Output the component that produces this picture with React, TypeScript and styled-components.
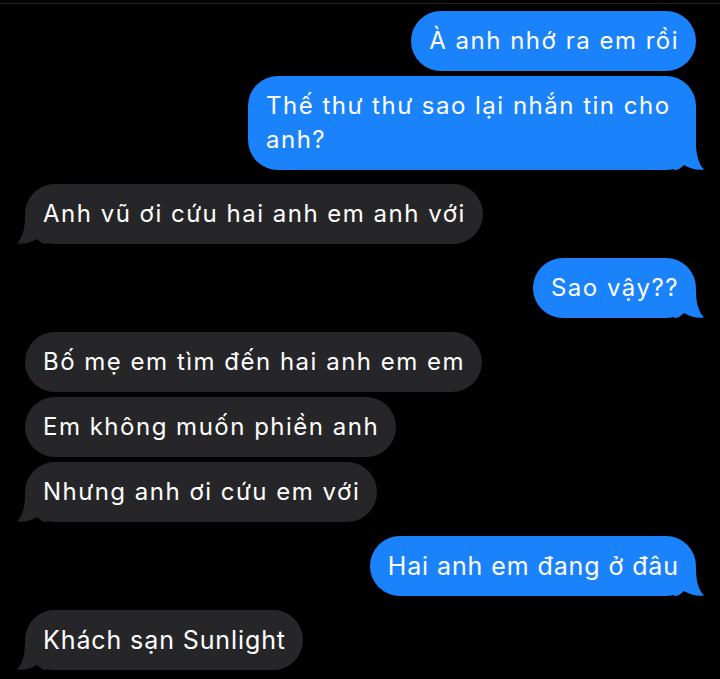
import React from "react";
import styled, { createGlobalStyle, css } from "styled-components";

const Global = createGlobalStyle`
  html, body { margin: 0; padding: 0; background: #000; }
  body { font-family: Inter, "Noto Sans", "Liberation Sans", sans-serif; -webkit-font-smoothing: antialiased; }
`;

const Screen = styled.div`
  width: 720px;
  height: 679px;
  background: #000;
  overflow: hidden;
  padding-top: 3px;
  box-sizing: border-box;
`;

const TopRule = styled.div`
  height: 1px;
  background: #232326;
`;

const Thread = styled.div`
  display: flex;
  flex-direction: column;
  padding: 7px 24px 0 25px;
`;

const Group = styled.div<{ $me?: boolean }>`
  display: flex;
  flex-direction: column;
  align-items: ${(p) => (p.$me ? "flex-end" : "flex-start")};
  gap: 5px;
  margin-bottom: 14px;
`;

const Bubble = styled.div<{ $me?: boolean; $narrow?: boolean; $max?: number }>`
  position: relative;
  box-sizing: border-box;
  max-width: ${(p) => p.$max ?? 470}px;
  padding: 13px 17px 13px 18px;
  border-radius: 30px;
  font-size: 24px;
  line-height: 34px;
  letter-spacing: 1.5px;
  color: #fff;
  background: ${(p) => (p.$me ? "#1a82fb" : "#262628")};
  ${(p) =>
    p.$narrow &&
    css`
      font-size: 25px;
      letter-spacing: 0.9px;
    `}
`;

const Text = styled.span`
  position: relative;
  z-index: 1;
`;

const Tail = styled.svg<{ $me?: boolean }>`
  position: absolute;
  bottom: 0;
  width: 30px;
  height: 28px;
  ${(p) =>
    p.$me
      ? css`
          right: -8px;
        `
      : css`
          left: -8px;
          transform: scaleX(-1);
        `}
`;

function BubbleTail({ me }: { me?: boolean }) {
  return (
    <Tail $me={me} viewBox="0 0 30 28">
      <path
        d="M0 0 H22 C22 12 24 21 30 27.5 C24 28.5 16 27 10 23 C7 26 4 28 0 28 Z"
        fill={me ? "#1a82fb" : "#262628"}
      />
    </Tail>
  );
}

type Msg = { text: string; tail?: boolean; narrow?: boolean };
type G = { me: boolean; msgs: Msg[]; max?: number };

const groups: G[] = [
  {
    me: true,
    max: 448,
    msgs: [
      { text: "À anh nhớ ra em rồi" },
      { text: "Thế thư thư sao lại nhắn tin cho anh?", tail: true },
    ],
  },
  { me: false, msgs: [{ text: "Anh vũ ơi cứu hai anh em anh với", tail: true }] },
  { me: true, msgs: [{ text: "Sao vậy??", tail: true }] },
  {
    me: false,
    msgs: [
      { text: "Bố mẹ em tìm đến hai anh em em" },
      { text: "Em không muốn phiền anh" },
      { text: "Nhưng anh ơi cứu em với", tail: true },
    ],
  },
  { me: true, msgs: [{ text: "Hai anh em đang ở đâu", tail: true, narrow: true }] },
  { me: false, msgs: [{ text: "Khách sạn Sunlight", tail: true, narrow: true }] },
];

export default function App() {
  return (
    <Screen>
      <Global />
      <TopRule />
      <Thread>
        {groups.map((g, i) => (
          <Group key={i} $me={g.me}>
            {g.msgs.map((m, j) => (
              <Bubble key={j} $me={g.me} $narrow={m.narrow} $max={g.max}>
                <Text>{m.text}</Text>
                {m.tail && <BubbleTail me={g.me} />}
              </Bubble>
            ))}
          </Group>
        ))}
      </Thread>
    </Screen>
  );
}
